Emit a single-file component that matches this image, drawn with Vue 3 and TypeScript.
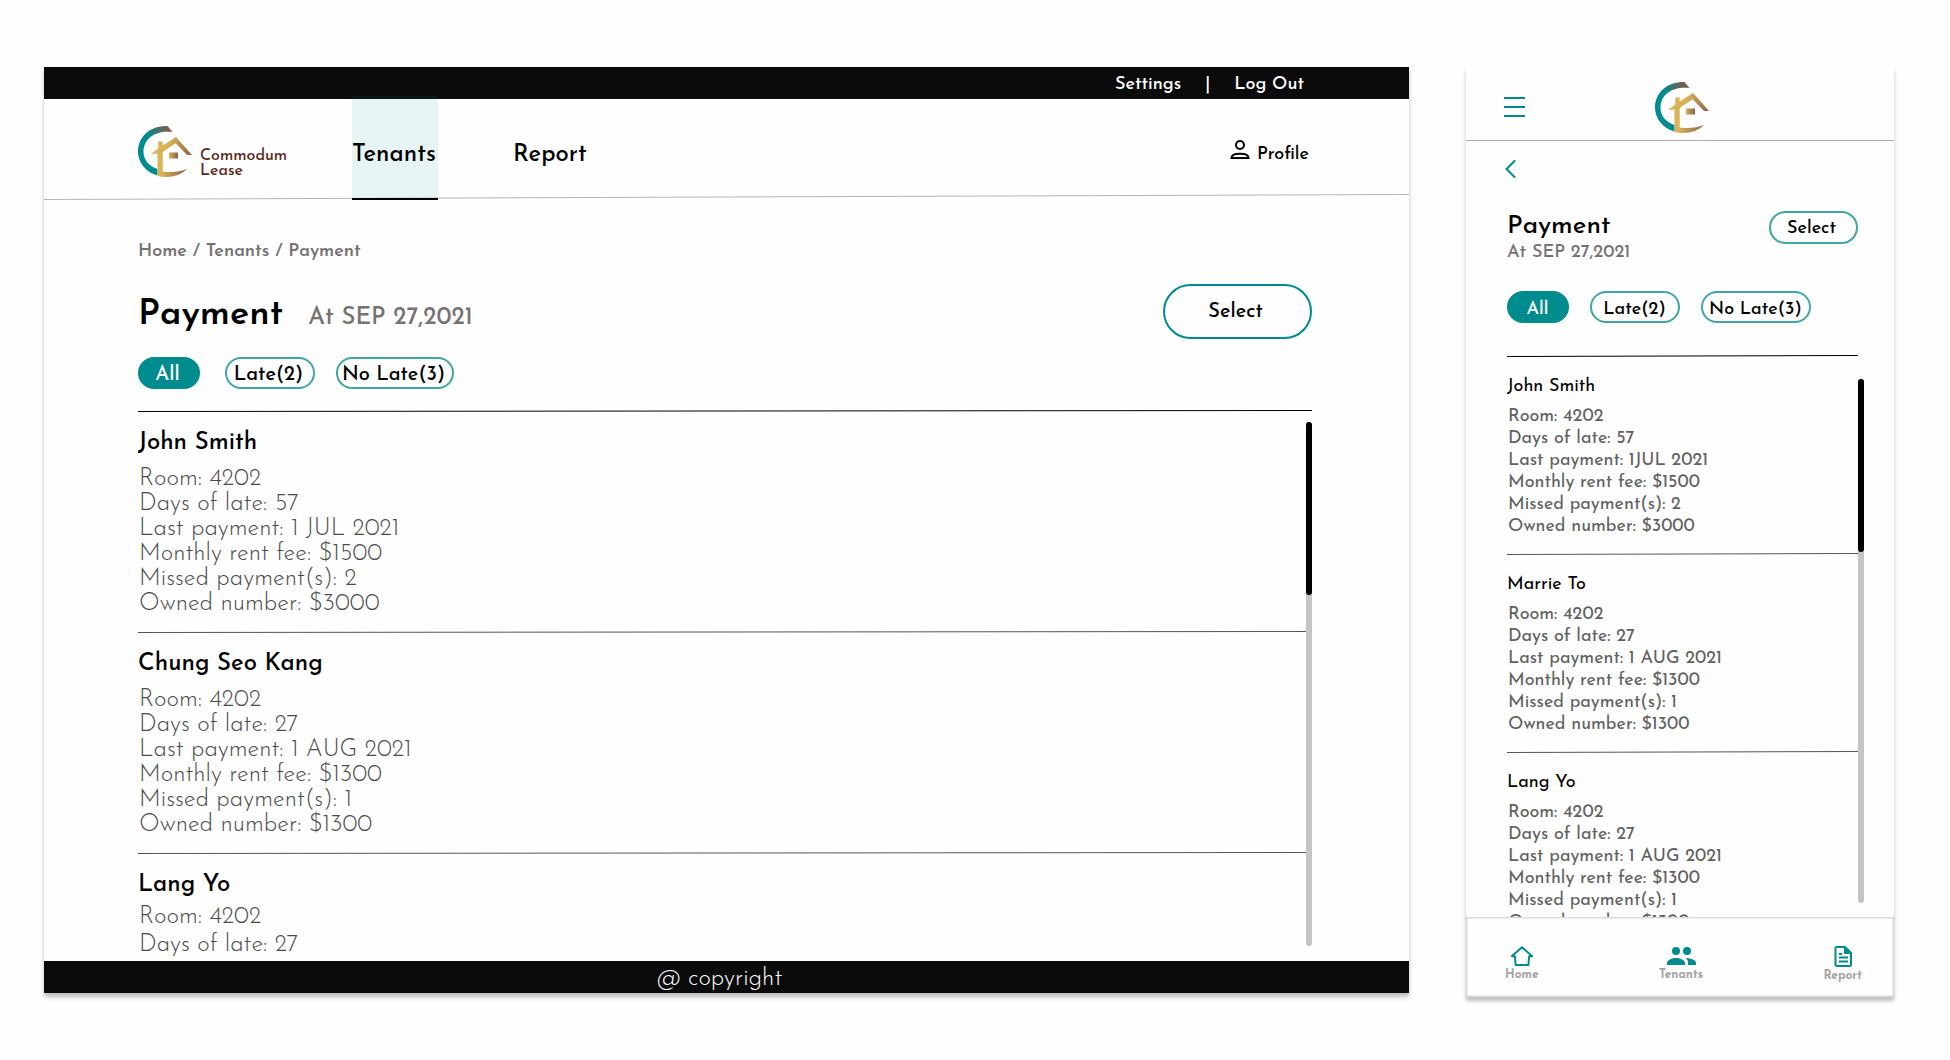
<script setup lang="ts">
import { ref } from 'vue'

interface Tenant {
  name: string
  details: string[]
  partial?: boolean
}

const filters = ['All', 'Late(2)', 'No Late(3)']
const desktopFilter = ref('All')
const mobileFilter = ref('All')

const lateOneMonth = [
  'Room: 4202',
  'Days of late: 27',
  'Last payment: 1 AUG 2021',
  'Monthly rent fee: $1300',
  'Missed payment(s): 1',
  'Owned number: $1300',
]

const desktopTenants: Tenant[] = [
  {
    name: 'John Smith',
    details: [
      'Room: 4202',
      'Days of late: 57',
      'Last payment: 1 JUL 2021',
      'Monthly rent fee: $1500',
      'Missed payment(s): 2',
      'Owned number: $3000',
    ],
  },
  { name: 'Chung Seo Kang', details: lateOneMonth },
  { name: 'Lang Yo', details: lateOneMonth.slice(0, 2), partial: true },
]

const mobileTenants: Tenant[] = [
  {
    name: 'John Smith',
    details: [
      'Room: 4202',
      'Days of late: 57',
      'Last payment: 1JUL 2021',
      'Monthly rent fee: $1500',
      'Missed payment(s): 2',
      'Owned number: $3000',
    ],
  },
  { name: 'Marrie To', details: lateOneMonth },
  { name: 'Lang Yo', details: lateOneMonth },
]
</script>

<template>
  <div class="board">
    <svg class="defs" aria-hidden="true">
      <defs>
        <linearGradient id="arc" x1="0.1" y1="0.6" x2="1" y2="0">
          <stop offset="0.35" stop-color="#008c8e" />
          <stop offset="1" stop-color="#9c4f3e" />
        </linearGradient>
        <linearGradient id="gold" gradientUnits="userSpaceOnUse" x1="14" y1="20" x2="54" y2="30">
          <stop offset="0.4" stop-color="#d8b254" />
          <stop offset="1" stop-color="#87604c" />
        </linearGradient>
        <linearGradient id="pane">
          <stop offset="0" stop-color="#d8b254" />
          <stop offset="1" stop-color="#87604c" />
        </linearGradient>
        <symbol id="logo" viewBox="0 0 54 51">
          <path fill="url(#arc)" d="M29.500 0 L34.500 6 C18 4 5.500 12 5.500 26 C5.500 34 11 40 19.500 43 V49.500 C8 46 0 37 0 25.500 C0 11 12 -0.500 29.500 0Z" />
          <path fill="url(#gold)" d="M13 28 L20.300 22.500 V15.500 H24.700 V19.500 L38 11 L54 29 H49 L37.500 17.300 L24.700 26 V45.500 C34 47 42 45.500 49 43 C42 50 31 52.500 19.500 50 V27.500Z" />
          <rect x="31" y="26.500" width="9" height="6" fill="url(#pane)" />
        </symbol>
      </defs>
    </svg>

    <section class="card desktop">
      <div class="topbar">
        <a href="#settings">Settings</a>
        <span>|</span>
        <a href="#logout">Log Out</a>
      </div>
      <header class="masthead">
        <a class="brand" href="#home">
          <svg class="mark"><use href="#logo" /></svg>
          <span>Commodum<br />Lease</span>
        </a>
        <nav class="tabs">
          <a class="tab active" href="#tenants">Tenants</a>
          <a class="tab" href="#report">Report</a>
        </nav>
        <a class="profile" href="#profile">
          <svg width="20" height="20" viewBox="0 0 20 20" fill="none" stroke="#000" stroke-width="2">
            <circle cx="10" cy="5" r="4" />
            <path d="M1.500 18 C1.500 15.500 5 13.800 10 13.800 S18.500 15.500 18.500 18Z" />
          </svg>
          Profile
        </a>
      </header>
      <svg class="head-rule" viewBox="0 0 100 6" preserveAspectRatio="none">
        <line x1="0" y1="5.500" x2="100" y2="0.500" />
      </svg>

      <div class="controls">
        <nav class="crumbs"><a href="#home">Home</a> / <a href="#tenants">Tenants</a> / <a href="#payment">Payment</a></nav>
        <div class="title-row">
          <h1>Payment</h1>
          <span class="date">At SEP 27,2021</span>
          <button class="select" type="button">Select</button>
        </div>
        <div class="chips">
          <button
            v-for="f in filters"
            :key="f"
            type="button"
            class="chip"
            :class="{ on: f === desktopFilter }"
            @click="desktopFilter = f"
          >{{ f }}</button>
        </div>
        <svg class="rule strong" viewBox="0 0 100 2" preserveAspectRatio="none">
          <line x1="0" y1="1.500" x2="100" y2="0.500" />
        </svg>
      </div>

      <div class="scroller">
        <ul class="list">
          <li v-for="t in desktopTenants" :key="t.name" :class="{ partial: t.partial }">
            <h2>{{ t.name }}</h2>
            <p v-for="d in t.details" :key="d">{{ d }}</p>
            <svg class="rule" viewBox="0 0 100 2" preserveAspectRatio="none">
              <line x1="0" y1="1.500" x2="100" y2="0.500" />
            </svg>
          </li>
        </ul>
        <div class="track"><div class="thumb"></div></div>
      </div>
      <footer>@ copyright</footer>
    </section>

    <section class="card mobile">
      <header class="m-head">
        <button class="icon-btn" type="button" aria-label="Menu">
          <svg width="21" height="20" viewBox="0 0 21 20" stroke="#008c8e" stroke-width="2">
            <path d="M0 1H21M0 10H21M0 19H21" />
          </svg>
        </button>
        <svg class="mark"><use href="#logo" /></svg>
      </header>

      <div class="controls">
        <button class="icon-btn back" type="button" aria-label="Back">
          <svg width="11" height="18" viewBox="0 0 11 18" fill="none" stroke="#008c8e" stroke-width="2">
            <path d="M9.500 1 L1.500 9 L9.500 17" stroke-linecap="round" />
          </svg>
        </button>
        <div class="title-row">
          <div class="heading">
            <h1>Payment</h1>
            <span class="date">At SEP 27,2021</span>
          </div>
          <button class="select" type="button">Select</button>
        </div>
        <div class="chips">
          <button
            v-for="f in filters"
            :key="f"
            type="button"
            class="chip"
            :class="{ on: f === mobileFilter }"
            @click="mobileFilter = f"
          >{{ f }}</button>
        </div>
        <svg class="rule strong" viewBox="0 0 100 2" preserveAspectRatio="none">
          <line x1="0" y1="1.500" x2="100" y2="0.500" />
        </svg>
      </div>

      <div class="scroller">
        <ul class="list">
          <li v-for="t in mobileTenants" :key="t.name">
            <h2>{{ t.name }}</h2>
            <p v-for="d in t.details" :key="d">{{ d }}</p>
            <svg class="rule" viewBox="0 0 100 2" preserveAspectRatio="none">
              <line x1="0" y1="1.500" x2="100" y2="0.500" />
            </svg>
          </li>
        </ul>
        <div class="track"><div class="thumb"></div></div>
      </div>

      <nav class="bottom">
        <a href="#home">
          <svg width="24" height="20" viewBox="0 0 24 20" fill="none" stroke="#008c8e" stroke-width="2">
            <path d="M12 1.300 L1.800 10.200 H4.800 L5.600 19 H18.400 L19.200 10.200 H22.200Z" stroke-linejoin="round" />
          </svg>
          Home
        </a>
        <a href="#tenants">
          <svg width="30" height="20" viewBox="0 0 30 20" fill="#008c8e">
            <circle cx="10" cy="5" r="4" />
            <circle cx="21" cy="5" r="4" />
            <path d="M1 19 V17 C1 14 6 12 10 12 S19 14 19 17 V19Z" />
            <path d="M20.500 12 C25 12.200 30 14 30 17 V19 H22 V17 C22 15 21.500 13.500 19.500 12Z" />
          </svg>
          Tenants
        </a>
        <a href="#report">
          <svg width="18" height="21" viewBox="0 0 18 21" fill="none" stroke="#008c8e" stroke-width="2">
            <path d="M3 1 H11 L17 7 V18.500 Q17 20 15.500 20 H3 Q1.500 20 1.500 18.500 V2.500 Q1.500 1 3 1Z" />
            <path d="M10 1 H11.500 L17 6.500 V8 H10Z" fill="#008c8e" stroke="none" />
            <path d="M5 8H8M5 11.500H14M5 15.500H14" />
          </svg>
          Report
        </a>
      </nav>
    </section>
  </div>
</template>

<style>
body {
  background: #fefefe;
}
</style>

<style scoped>
.board {
  display: grid;
  grid-template-columns: 1365fr 428fr;
  gap: 57px;
  box-sizing: border-box;
  height: 100vh;
  padding: 67px 56px 63px 44px;
  font-family: 'Josefin Sans', Lato, sans-serif;
  font-weight: 500;
  color: #000;
}
.defs {
  position: absolute;
  width: 0;
  height: 0;
}
a {
  color: inherit;
  text-decoration: none;
}
button {
  font: inherit;
  color: inherit;
  background: none;
  border: 0;
  padding: 0;
  cursor: pointer;
}
h1,
h2,
p,
ul {
  margin: 0;
  padding: 0;
  font-weight: inherit;
  list-style: none;
}
svg {
  display: block;
}
.card {
  display: flex;
  flex-direction: column;
  min-width: 0;
  min-height: 0;
  background: #fefefe;
  box-shadow: 0 4px 4px rgba(0, 0, 0, 0.25);
}
.desktop {
  margin-bottom: 4px;
}
.mark {
  width: 54px;
  height: 51px;
}

.topbar {
  display: flex;
  justify-content: flex-end;
  gap: 24px;
  height: 32px;
  padding-right: 105px;
  background: #0b0b0b;
  color: #fff;
  font-size: 18px;
  line-height: 36px;
}
.masthead {
  display: flex;
  height: 95px;
  padding: 0 100px 0 94px;
}
.brand {
  display: flex;
  gap: 8px;
  width: 214px;
  padding-top: 27px;
  color: #5a2a1c;
  font-size: 16px;
  line-height: 15px;
}
.brand span {
  padding-top: 23px;
}
.tabs {
  display: flex;
  gap: 75px;
  font-size: 24px;
  line-height: 24px;
}
.tab {
  position: relative;
  height: 55px;
  margin-top: -3px;
  padding: 47px 2px 0 0;
}
.tab.active {
  background: rgba(0, 140, 142, 0.09);
  border-bottom: 2px solid #000;
}
.profile {
  display: flex;
  gap: 7px;
  margin-left: auto;
  padding-top: 41px;
  font-size: 18px;
  line-height: 30px;
}
.head-rule {
  width: 100%;
  height: 6px;
  stroke: #b9b4b4;
}
.rule {
  width: 100%;
  height: 2px;
  stroke: #555;
}
.rule.strong {
  stroke: #000;
}
.rule line,
.head-rule line {
  vector-effect: non-scaling-stroke;
  stroke-width: 1px;
}

.desktop .controls {
  padding: 40px 97px 0 94px;
}
.crumbs {
  color: #777172;
  font-size: 18px;
  font-weight: 600;
  line-height: 24px;
}
.title-row {
  display: flex;
}
.date {
  color: #777172;
}
.desktop .title-row {
  align-items: baseline;
  margin-top: 20px;
  height: 55px;
  line-height: 63px;
}
.desktop h1 {
  font-size: 36px;
  font-weight: 600;
}
.desktop .date {
  margin-left: 25px;
  font-size: 24px;
}
.select {
  box-sizing: border-box;
  margin-left: auto;
  border: 2px solid #008c8e;
}
.desktop .select {
  align-self: flex-start;
  width: 149px;
  height: 55px;
  padding-right: 4px;
  border-radius: 28px;
  font-size: 20px;
  line-height: 24px;
}
.chips {
  display: flex;
  gap: 21px;
  font-size: 18px;
}
.chip {
  box-sizing: border-box;
  min-width: 90px;
  height: 32px;
  padding: 5px 7px 0 6px;
  border: 2px solid #3fa5a5;
  border-radius: 16px;
  line-height: 22px;
  white-space: nowrap;
}
.chip.on {
  min-width: 62px;
  background: #008c8e;
  border-color: #008c8e;
  color: #fff;
}
.desktop .chips {
  margin: 18px 0 21px;
  font-size: 20px;
}
.desktop .chip {
  padding: 4px 7px 0 4px;
}
.desktop .chip.on {
  margin-right: 4px;
}

.scroller {
  display: flex;
  flex: 1;
  min-height: 0;
}
.list {
  flex: 1;
  overflow: hidden;
}
.track {
  width: 6px;
  border-radius: 3px;
  background: #c4c4c4;
}
.thumb {
  height: 33%;
  border-radius: 3px;
  background: #000;
}
.desktop .scroller {
  padding: 0 97px 0 94px;
}
.desktop .track {
  margin: 10px 0 15px;
}
.desktop li {
  padding-top: 16px;
}
.desktop h2 {
  margin-bottom: 9px;
  font-size: 24px;
  line-height: 30px;
}
.desktop p {
  padding-left: 1px;
  color: #4a4a4a;
  font-size: 24px;
  font-weight: 300;
  line-height: 25px;
}
.desktop li .rule {
  margin-top: 14px;
}
.desktop .partial h2 {
  margin-bottom: 3px;
}
.desktop .partial p {
  line-height: 28px;
}
footer {
  box-sizing: border-box;
  height: 32px;
  padding: 2px 14px 0 0;
  background: #0b0b0b;
  color: #fff;
  font-size: 24px;
  font-weight: 300;
  line-height: 32px;
  text-align: center;
}

.icon-btn {
  display: block;
}
.m-head {
  display: grid;
  grid-template-columns: 1fr auto 1fr;
  align-items: center;
  box-sizing: border-box;
  height: 74px;
  padding: 7px 34px 0 38px;
  border-bottom: 1px solid #b5adad;
}
.m-head .icon-btn {
  justify-self: start;
}
.back {
  margin-left: -2px;
}
.mobile .controls {
  padding: 19px 36px 0 41px;
}
.mobile .title-row {
  margin-top: 31px;
}
.heading {
  padding-top: 4px;
}
.mobile h1 {
  font-size: 26px;
  line-height: 28px;
}
.mobile .date {
  display: block;
  font-size: 18px;
  line-height: 24px;
}
.mobile .select {
  width: 89px;
  height: 33px;
  margin-top: 2px;
  padding: 3px 4px 0 0;
  border-color: #3fa5a5;
  border-radius: 17px;
  font-size: 18px;
  line-height: 22px;
}
.mobile .chips {
  margin: 26px 0 32px;
}
.mobile .scroller {
  padding: 0 30px 0 41px;
}
.mobile .track {
  margin: 22px 0 14px;
}
.mobile li {
  padding-top: 19px;
}
.mobile h2 {
  margin-bottom: 8px;
  font-size: 18px;
  font-weight: 400;
  line-height: 22px;
}
.mobile p {
  padding-left: 1px;
  color: #606060;
  font-size: 18px;
  font-weight: 400;
  line-height: 22px;
}
.mobile li .rule {
  margin-top: 15px;
}
.bottom {
  display: flex;
  justify-content: space-between;
  box-sizing: border-box;
  height: 80px;
  padding: 29px 32px 0 39px;
  box-shadow: inset 0 0 3px rgba(0, 0, 0, 0.4);
  color: #a8a4a4;
  font-size: 12px;
  font-weight: 700;
  line-height: 14px;
}
.bottom a {
  display: flex;
  flex-direction: column;
  align-items: center;
  gap: 2px;
}
</style>
